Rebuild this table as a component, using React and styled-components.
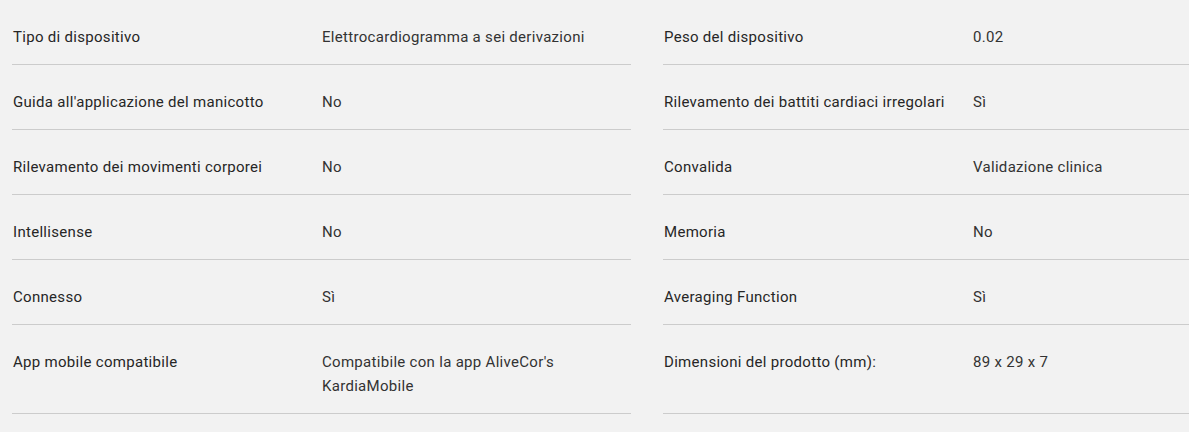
import React from 'react';
import styled, { createGlobalStyle } from 'styled-components';

const leftSpecs = [
  ['Tipo di dispositivo', 'Elettrocardiogramma a sei derivazioni'],
  ["Guida all'applicazione del manicotto", 'No'],
  ['Rilevamento dei movimenti corporei', 'No'],
  ['Intellisense', 'No'],
  ['Connesso', 'Sì'],
  ['App mobile compatibile', "Compatibile con la app AliveCor's KardiaMobile"],
];

const rightSpecs = [
  ['Peso del dispositivo', '0.02'],
  ['Rilevamento dei battiti cardiaci irregolari', 'Sì'],
  ['Convalida', 'Validazione clinica'],
  ['Memoria', 'No'],
  ['Averaging Function', 'Sì'],
  ['Dimensioni del prodotto (mm):', '89 x 29 x 7'],
];

// left and right rows sit in one grid so each pair shares a height
const pairs = leftSpecs.map((left, i) => [left, rightSpecs[i]]);

function App() {
  return (
    <>
      <GlobalStyle />
      <SpecGrid>
        {pairs.map(([left, right]) => (
          <React.Fragment key={left[0]}>
            <SpecRow label={left[0]} value={left[1]} />
            <SpecRow label={right[0]} value={right[1]} />
          </React.Fragment>
        ))}
      </SpecGrid>
    </>
  );
}

function SpecRow({ label, value }) {
  return (
    <Row>
      <Label>{label}</Label>
      <Value>{value}</Value>
    </Row>
  );
}

export default App;

const GlobalStyle = createGlobalStyle`
  body {
    margin: 0;
    background: #f2f2f2;
    font-family: Roboto, "Noto Sans", sans-serif;
    overflow: hidden;
  }
`;

const SpecGrid = styled.div`
  display: grid;
  grid-template-columns: 619px 619px;
  column-gap: 32px;
  padding-left: 12px;
  width: 1300px;
`;

const Row = styled.div`
  display: grid;
  grid-template-columns: 309px 1fr;
  padding: 25px 0 15px 1px;
  border-bottom: 1px solid #cccccc;
  font-size: 15px;
  line-height: 24px;
  letter-spacing: 0.3px;
`;

const Label = styled.div`
  color: #262626;
`;

const Value = styled.div`
  color: #333333;
  padding-right: 20px;
`;
